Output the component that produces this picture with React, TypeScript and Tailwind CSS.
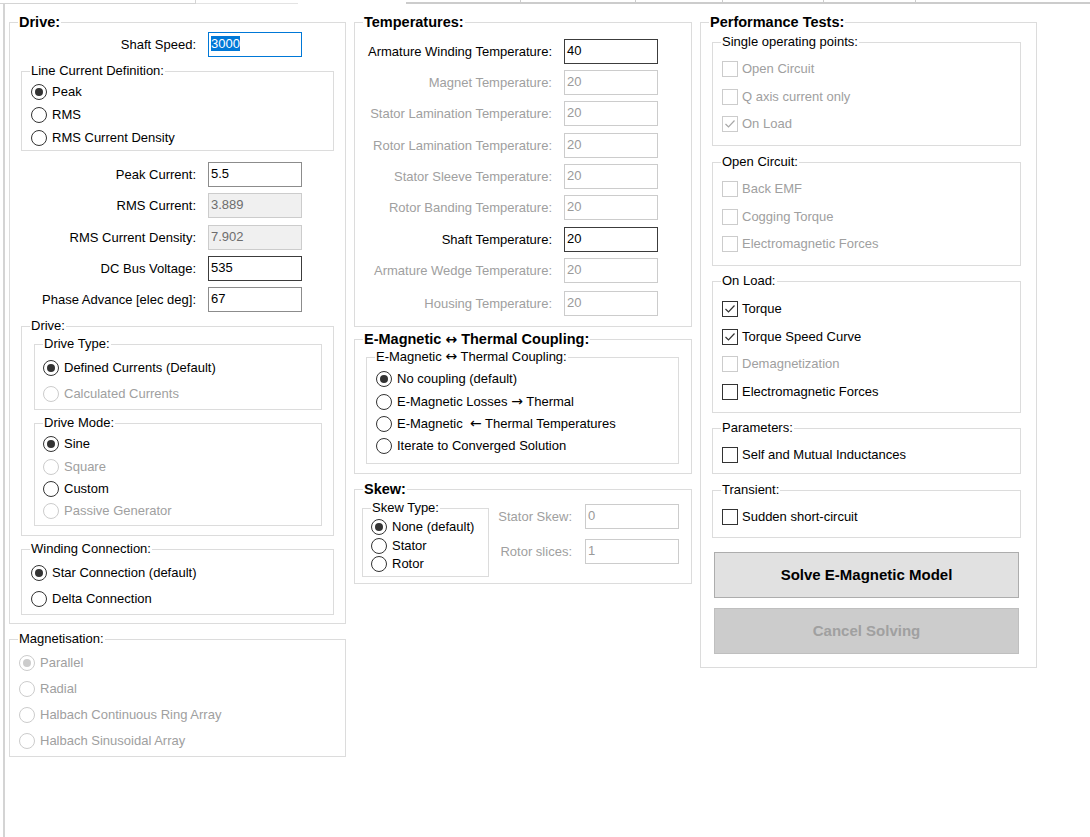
import type { ReactNode } from 'react';

type Tone = 'focus' | 'normal' | 'dark' | 'grey' | 'off';

const boxTone: Record<Tone, string> = {
    focus: 'border-[#0078d7] bg-white text-black',
    normal: 'border-[#8c8c8c] bg-white text-black',
    dark: 'border-[#3c3c3c] bg-white text-black',
    grey: 'border-[#cccccc] bg-[#f0f0f0] text-[#6d6d6d]',
    off: 'border-[#cccccc] bg-white text-[#9a9a9a]',
};

// arrows sit on the math axis in the original, DejaVu's do too
function Arrow({ c }: { c: string }) {
    return <span className="font-['DejaVu_Sans',sans-serif] text-[14px] leading-none">{c}</span>;
}

function GroupBox({ title, bold, className, children }: { title: ReactNode; bold?: boolean; className?: string; children: ReactNode }) {
    return (
        <fieldset className={`border border-[#dcdcdc] ${className ?? ''}`}>
            <legend className={`ml-[8px] px-[1px] leading-4 ${bold ? 'font-bold text-[14.5px]' : 'text-[13px]'} text-black`}>
                {title}
            </legend>
            {children}
        </fieldset>
    );
}

function TextBox({ value, tone = 'normal' }: { value: string; tone?: Tone }) {
    return (
        <div className={`w-[94px] h-[25px] border px-[2px] pt-[3px] leading-4 ${boxTone[tone]}`}>
            {tone === 'focus' ? <span className="bg-[#0078d7] text-white">{value}</span> : value}
        </div>
    );
}

function FieldRow({ label, value, tone, dim, labelW, gap, className }: {
    label: string; value: string; tone?: Tone; dim?: boolean; labelW: string; gap: string; className?: string;
}) {
    return (
        <div className={`flex items-center h-[25px] ${className ?? ''}`}>
            <span className={`${labelW} text-right whitespace-nowrap ${dim ? 'text-[#a0a0a0]' : 'text-black'}`}>{label}</span>
            <div className={gap}>
                <TextBox value={value} tone={tone} />
            </div>
        </div>
    );
}

function Radio({ label, checked, disabled, className }: { label: ReactNode; checked?: boolean; disabled?: boolean; className?: string }) {
    return (
        <div className={`flex items-center ${className ?? ''}`}>
            <span className={`w-4 h-4 shrink-0 rounded-full border bg-white flex items-center justify-center ${disabled ? 'border-[#cccccc]' : 'border-[#333333]'}`}>
                {checked && <span className={`w-2 h-2 rounded-full ${disabled ? 'bg-[#cccccc]' : 'bg-[#333333]'}`} />}
            </span>
            <span className={`ml-[5px] whitespace-pre ${disabled ? 'text-[#a0a0a0]' : 'text-black'}`}>{label}</span>
        </div>
    );
}

function Check({ label, checked, disabled, className }: { label: string; checked?: boolean; disabled?: boolean; className?: string }) {
    return (
        <div className={`flex items-center h-[26px] ${className ?? ''}`}>
            <span className={`w-4 h-4 shrink-0 border bg-white flex items-center justify-center ${disabled ? 'border-[#cccccc]' : 'border-[#333333]'}`}>
                {checked && (
                    <svg width="12" height="12" viewBox="0 0 12 12">
                        <polyline points="1.5,6 4.5,9 10.5,2.5" fill="none" stroke={disabled ? '#a8a8a8' : '#333333'} strokeWidth="1.2" />
                    </svg>
                )}
            </span>
            <span className={`ml-[4px] ${disabled ? 'text-[#a0a0a0]' : 'text-black'}`}>{label}</span>
        </div>
    );
}

function TabStrip() {
    return (
        <div className="flex h-[4px]">
            <div className="w-[196px] border-b border-r border-[#d4d4d4]" />
            <div className="w-[102px] border-b border-[#e3e3e3]" />
            <div className="w-[108px]" />
            <div className="w-[115px] border-b-2 border-r border-[#cccccc]" />
            <div className="w-[115px] border-b-2 border-r border-[#cccccc]" />
            <div className="w-[87px] border-b-2 border-r border-[#cccccc]" />
            <div className="w-[101px] border-b-2 border-r border-[#cccccc]" />
            <div className="w-[92px] border-b-2 border-r border-[#cccccc]" />
            <div className="flex-1 border-b-2 border-[#cccccc]" />
        </div>
    );
}

function DriveColumn() {
    const lw = 'w-[186px]';
    return (
        <div className="w-[337px] flex flex-col">
            <GroupBox title="Drive:" bold className="pb-[8px]">
                <FieldRow label="Shaft Speed:" value="3000" tone="focus" labelW={lw} gap="ml-[12px]" className="mt-[2px]" />

                <GroupBox title="Line Current Definition:" className="mt-[6px] mx-[11px] pb-[1px]">
                    <div className="flex flex-col pl-[9px] mt-[1px]">
                        <Radio label="Peak" checked className="h-[23px]" />
                        <Radio label="RMS" className="h-[23px]" />
                        <Radio label="RMS Current Density" className="h-[23px]" />
                    </div>
                </GroupBox>

                <FieldRow label="Peak Current:" value="5.5" labelW={lw} gap="ml-[12px]" className="mt-[11px]" />
                <FieldRow label="RMS Current:" value="3.889" tone="grey" labelW={lw} gap="ml-[12px]" className="mt-[6px]" />
                <FieldRow label="RMS Current Density:" value="7.902" tone="grey" labelW={lw} gap="ml-[12px]" className="mt-[7px]" />
                <FieldRow label="DC Bus Voltage:" value="535" tone="dark" labelW={lw} gap="ml-[12px]" className="mt-[6px]" />
                <FieldRow label="Phase Advance [elec deg]:" value="67" labelW={lw} gap="ml-[12px]" className="mt-[6px]" />

                <GroupBox title="Drive:" className="mt-[6px] mx-[11px] pb-[9px]">
                    <GroupBox title="Drive Type:" className="mt-[2px] ml-[12px] mr-[11px] pb-[3px]">
                        <div className="flex flex-col pl-[8px]">
                            <Radio label="Defined Currents (Default)" checked className="h-[24px] mt-[4px]" />
                            <Radio label="Calculated Currents" disabled className="h-[24px] mt-[2px]" />
                        </div>
                    </GroupBox>
                    <GroupBox title="Drive Mode:" className="mt-[5px] ml-[12px] mr-[11px] pb-[3px]">
                        <div className="flex flex-col pl-[8px] mt-[2px]">
                            <Radio label="Sine" checked className="h-[22px]" />
                            <Radio label="Square" disabled className="h-[23px]" />
                            <Radio label="Custom" className="h-[22px]" />
                            <Radio label="Passive Generator" disabled className="h-[22px]" />
                        </div>
                    </GroupBox>
                </GroupBox>

                <GroupBox title="Winding Connection:" className="mt-[5px] mx-[11px] pb-[3px]">
                    <div className="flex flex-col pl-[9px]">
                        <Radio label="Star Connection (default)" checked className="h-[24px] mt-[4px]" />
                        <Radio label="Delta Connection" className="h-[24px] mt-[2px]" />
                    </div>
                </GroupBox>
            </GroupBox>

            <GroupBox title="Magnetisation:" className="mt-[7px] pb-[3px]">
                <div className="flex flex-col gap-[2px] pl-[9px] mt-[4px]">
                    <Radio label="Parallel" checked disabled className="h-[24px]" />
                    <Radio label="Radial" disabled className="h-[24px]" />
                    <Radio label="Halbach Continuous Ring Array" disabled className="h-[24px]" />
                    <Radio label="Halbach Sinusoidal Array" disabled className="h-[24px]" />
                </div>
            </GroupBox>
        </div>
    );
}

function ThermalColumn() {
    const lw = 'w-[197px]';
    const coupling = <>E-Magnetic <Arrow c="↔" /> Thermal Coupling:</>;
    return (
        <div className="w-[338px] flex flex-col">
            <GroupBox title="Temperatures:" bold className="pb-[10px]">
                <FieldRow label="Armature Winding Temperature:" value="40" tone="dark" labelW={lw} gap="ml-[12px]" className="mt-[9px]" />
                <FieldRow label="Magnet Temperature:" value="20" tone="off" dim labelW={lw} gap="ml-[12px]" className="mt-[6px]" />
                <FieldRow label="Stator Lamination Temperature:" value="20" tone="off" dim labelW={lw} gap="ml-[12px]" className="mt-[6px]" />
                <FieldRow label="Rotor Lamination Temperature:" value="20" tone="off" dim labelW={lw} gap="ml-[12px]" className="mt-[7px]" />
                <FieldRow label="Stator Sleeve Temperature:" value="20" tone="off" dim labelW={lw} gap="ml-[12px]" className="mt-[6px]" />
                <FieldRow label="Rotor Banding Temperature:" value="20" tone="off" dim labelW={lw} gap="ml-[12px]" className="mt-[6px]" />
                <FieldRow label="Shaft Temperature:" value="20" tone="dark" labelW={lw} gap="ml-[12px]" className="mt-[7px]" />
                <FieldRow label="Armature Wedge Temperature:" value="20" tone="off" dim labelW={lw} gap="ml-[12px]" className="mt-[6px]" />
                <FieldRow label="Housing Temperature:" value="20" tone="off" dim labelW={lw} gap="ml-[12px]" className="mt-[8px]" />
            </GroupBox>

            <GroupBox title={coupling} bold className="mt-[4px] pb-[9px]">
                <GroupBox title={coupling} className="mt-[2px] ml-[11px] mr-[12px] pb-[6px]">
                    <div className="flex flex-col pl-[9px] mt-[3px]">
                        <Radio label="No coupling (default)" checked className="h-[22px]" />
                        <Radio label={<>E-Magnetic Losses <Arrow c="→" /> Thermal</>} className="h-[23px]" />
                        <Radio label={<>E-Magnetic  <Arrow c="←" /> Thermal Temperatures</>} className="h-[22px]" />
                        <Radio label="Iterate to Converged Solution" className="h-[22px]" />
                    </div>
                </GroupBox>
            </GroupBox>

            <GroupBox title="Skew:" bold className="mt-[7px] pb-[6px]">
                <div className="flex">
                    <GroupBox title="Skew Type:" className="mt-[3px] ml-[7px] w-[127px] pb-[3px]">
                        <div className="flex flex-col pl-[8px] mt-[2px]">
                            <Radio label="None (default)" checked className="h-[18px]" />
                            <Radio label="Stator" className="h-[19px]" />
                            <Radio label="Rotor" className="h-[18px]" />
                        </div>
                    </GroupBox>
                    <div className="flex-1 flex flex-col items-end pr-[12px]">
                        <FieldRow label="Stator Skew:" value="0" tone="off" dim labelW="w-auto" gap="ml-[13px]" className="mt-[7px]" />
                        <FieldRow label="Rotor slices:" value="1" tone="off" dim labelW="w-auto" gap="ml-[13px]" className="mt-[10px]" />
                    </div>
                </div>
            </GroupBox>
        </div>
    );
}

function TestsColumn() {
    return (
        <div className="w-[337px] flex flex-col">
            <GroupBox title="Performance Tests:" bold className="pb-[13px]">
                <GroupBox title="Single operating points:" className="mt-[4px] ml-[11px] mr-[15px] pb-[8px]">
                    <div className="flex flex-col pl-[9px]">
                        <Check label="Open Circuit" disabled className="mt-[6px]" />
                        <Check label="Q axis current only" disabled className="mt-[2px]" />
                        <Check label="On Load" checked disabled className="mt-[1px]" />
                    </div>
                </GroupBox>
                <GroupBox title="Open Circuit:" className="mt-[8px] ml-[11px] mr-[15px] pb-[8px]">
                    <div className="flex flex-col pl-[9px]">
                        <Check label="Back EMF" disabled className="mt-[6px]" />
                        <Check label="Cogging Torque" disabled className="mt-[2px]" />
                        <Check label="Electromagnetic Forces" disabled className="mt-[1px]" />
                    </div>
                </GroupBox>
                <GroupBox title="On Load:" className="mt-[7px] ml-[11px] mr-[15px] pb-[7px]">
                    <div className="flex flex-col pl-[9px]">
                        <Check label="Torque" checked className="mt-[7px]" />
                        <Check label="Torque Speed Curve" checked className="mt-[2px]" />
                        <Check label="Demagnetization" disabled className="mt-[1px]" />
                        <Check label="Electromagnetic Forces" className="mt-[2px]" />
                    </div>
                </GroupBox>
                <GroupBox title="Parameters:" className="mt-[7px] ml-[11px] mr-[15px] pb-[5px]">
                    <div className="flex flex-col pl-[9px]">
                        <Check label="Self and Mutual Inductances" className="mt-[6px]" />
                    </div>
                </GroupBox>
                <GroupBox title="Transient:" className="mt-[8px] ml-[11px] mr-[15px] pb-[7px]">
                    <div className="flex flex-col pl-[9px]">
                        <Check label="Sudden short-circuit" className="mt-[6px]" />
                    </div>
                </GroupBox>

                <button className="mt-[14px] ml-[13px] w-[305px] h-[46px] border border-[#adadad] bg-[#e1e1e1] font-bold text-[15px] text-black">
                    Solve E-Magnetic Model
                </button>
                <button disabled className="block mt-[10px] ml-[13px] w-[305px] h-[46px] border border-[#bfbfbf] bg-[#cccccc] font-bold text-[15px] text-[#a0a0a0]">
                    Cancel Solving
                </button>
            </GroupBox>
        </div>
    );
}

export default function App() {
    return (
        <div className="w-[1090px] h-[837px] overflow-hidden bg-white flex flex-col text-[13px] leading-4 text-black font-['Liberation_Sans',Arial,sans-serif]">
            <TabStrip />
            <div className="flex-1 ml-[3px] border-l-2 border-[#d4d4d4] pl-[4px] pt-[10px]">
                <div className="flex items-start gap-[8px]">
                    <DriveColumn />
                    <ThermalColumn />
                    <TestsColumn />
                </div>
            </div>
        </div>
    );
}
